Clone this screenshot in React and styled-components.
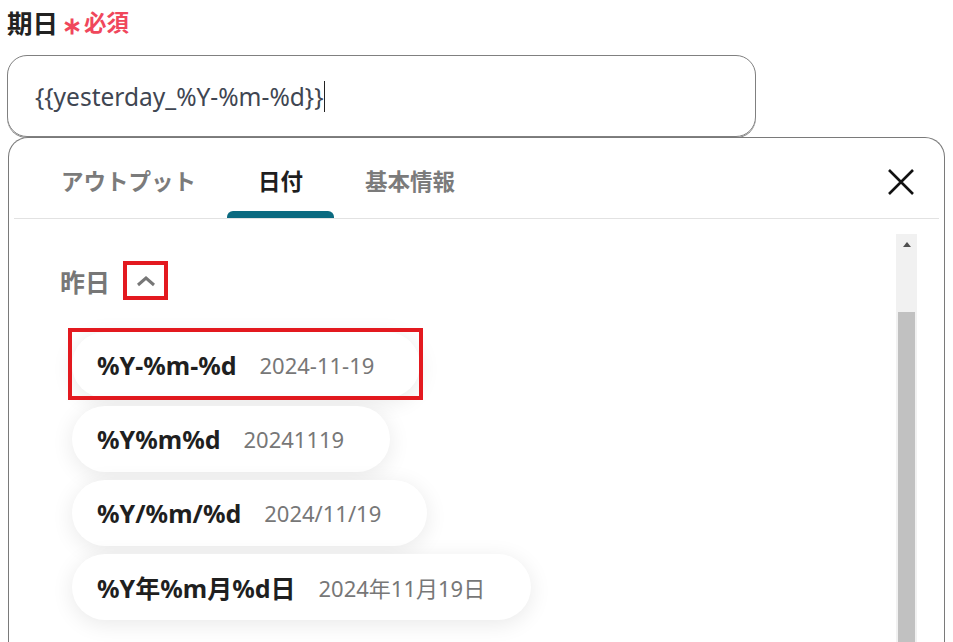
import React from 'react';
import styled, { createGlobalStyle } from 'styled-components';

const GlobalStyle = createGlobalStyle`
  html, body {
    margin: 0;
    height: 642px;
    overflow: hidden;
    background: #fff;
  }
  body {
    font-family: "Noto Sans", "Noto Sans CJK JP", sans-serif;
  }
`;

const Page = styled.div`
  padding: 3px 0 0 7px;
`;

const LabelRow = styled.div`
  display: flex;
  align-items: center;
  gap: 4px;
  height: 36px;
  padding-left: 0;
`;

const Label = styled.span`
  font-size: 25.5px;
  font-weight: 700;
  color: #222;
`;

const Required = styled.span`
  color: #f0475c;
  font-weight: 700;
  font-size: 22.5px;
  display: flex;
  align-items: center;
  gap: 2px;
`;

const Star = styled.span`
  font-size: 24px;
  font-weight: 700;
  margin-top: 6px;
`;

const Input = styled.div`
  margin-top: 16px;
  width: 720px;
  height: 80px;
  border: 1px solid #808080;
  border-radius: 20px;
  box-shadow: 0 1px 0 #888;
  display: flex;
  align-items: center;
  padding-left: 27px;
  box-sizing: content-box;
  font-size: 24.5px;
  color: #3f4652;
`;

const Caret = styled.span`
  display: inline-block;
  width: 0;
  height: 31px;
  border-left: 1px solid #222;
  margin-left: 1px;
`;

const Panel = styled.div`
  margin-left: 1px;
  width: 935px;
  height: 540px;
  border: 1px solid #7a7a7a;
  border-bottom: none;
  border-radius: 20px 20px 0 0;
  display: flex;
  flex-direction: column;
  background: #fff;
`;

const Header = styled.div`
  margin: 0 5px;
  padding-left: 16px;
  height: 80px;
  display: flex;
  align-items: stretch;
  border-bottom: 1px solid #e2e2e2;
`;

const Tab = styled.div`
  position: relative;
  display: flex;
  align-items: center;
  padding: 4px 31px 0;
  font-size: 22.5px;
  font-weight: 700;
  color: ${p => (p.$active ? '#1e1e1e' : '#7b7b7b')};

  &::after {
    content: '';
    display: ${p => (p.$active ? 'block' : 'none')};
    position: absolute;
    left: 0;
    right: 0;
    bottom: 0;
    height: 7px;
    border-radius: 6px 6px 0 0;
    background: #0b6a80;
  }
`;

const Close = styled.button`
  margin-left: auto;
  margin-right: 24px;
  align-self: center;
  margin-top: 8px;
  border: none;
  background: none;
  padding: 0;
  width: 28px;
  height: 28px;
  display: flex;
  align-items: center;
  justify-content: center;
`;

const Body = styled.div`
  flex: 1;
  display: flex;
  padding: 15px 27px 0 0;
  min-height: 0;
`;

const Content = styled.div`
  flex: 1;
  padding: 27px 0 0 51px;
`;

const GroupHead = styled.div`
  display: flex;
  align-items: center;
  gap: 13px;
  font-size: 25px;
  font-weight: 700;
  color: #777;
`;

const Toggle = styled.div`
  width: 37px;
  height: 31px;
  border: 4px solid #e3191f;
  display: flex;
  align-items: center;
  justify-content: center;
`;

const List = styled.div`
  margin-top: 32px;
  margin-left: 12px;
  display: flex;
  flex-direction: column;
  align-items: flex-start;
  gap: 8px;
`;

const Pill = styled.div`
  position: relative;
  height: 66px;
  display: flex;
  align-items: center;
  padding: 0 46px 0 25px;
  border-radius: 33px;
  background: #fff;
  box-shadow: 0 4px 22px rgba(0, 0, 0, 0.09);

  &::after {
    content: '';
    display: ${p => (p.$marked ? 'block' : 'none')};
    position: absolute;
    top: -4px;
    left: -4px;
    right: -3px;
    bottom: -2px;
    border: 4px solid #e3191f;
  }
`;

const Key = styled.span`
  font-size: 25px;
  font-weight: 700;
  color: #1f1f1f;
`;

const Value = styled.span`
  margin-left: 23px;
  font-size: 22px;
  color: #777;
`;

const Scrollbar = styled.div`
  width: 21px;
  background: #f1f1f1;
  display: flex;
  flex-direction: column;
  align-items: center;
`;

const Arrow = styled.div`
  margin-top: 8px;
  width: 0;
  height: 0;
  border-left: 4px solid transparent;
  border-right: 4px solid transparent;
  border-bottom: 5px solid #505050;
`;

const Thumb = styled.div`
  margin-top: 65px;
  align-self: stretch;
  margin-left: 2px;
  margin-right: 2px;
  flex: 1;
  background: #c1c1c1;
`;

const formats = [
  { key: '%Y-%m-%d', value: '2024-11-19', marked: true },
  { key: '%Y%m%d', value: '20241119' },
  { key: '%Y/%m/%d', value: '2024/11/19' },
  { key: '%Y年%m月%d日', value: '2024年11月19日' },
];

export default function App() {
  return (
    <Page>
      <GlobalStyle />
      <LabelRow>
        <Label>期日</Label>
        <Required>
          <Star>∗</Star>必須
        </Required>
      </LabelRow>
      <Input>
        {'{{yesterday_%Y-%m-%d}}'}
        <Caret />
      </Input>
      <Panel>
        <Header>
          <Tab>アウトプット</Tab>
          <Tab $active>日付</Tab>
          <Tab>基本情報</Tab>
          <Close aria-label="閉じる">
            <svg width="28" height="28" viewBox="0 0 28 28">
              <path d="M2 2 L26 26 M26 2 L2 26" stroke="#111" strokeWidth="2.6" />
            </svg>
          </Close>
        </Header>
        <Body>
          <Content>
            <GroupHead>
              昨日
              <Toggle>
                <svg width="20" height="12" viewBox="0 0 20 12">
                  <path d="M2 10 L10 3 L18 10" fill="none" stroke="#777" strokeWidth="3" />
                </svg>
              </Toggle>
            </GroupHead>
            <List>
              {formats.map(f => (
                <Pill key={f.key} $marked={f.marked}>
                  <Key>{f.key}</Key>
                  <Value>{f.value}</Value>
                </Pill>
              ))}
            </List>
          </Content>
          <Scrollbar>
            <Arrow />
            <Thumb />
          </Scrollbar>
        </Body>
      </Panel>
    </Page>
  );
}
